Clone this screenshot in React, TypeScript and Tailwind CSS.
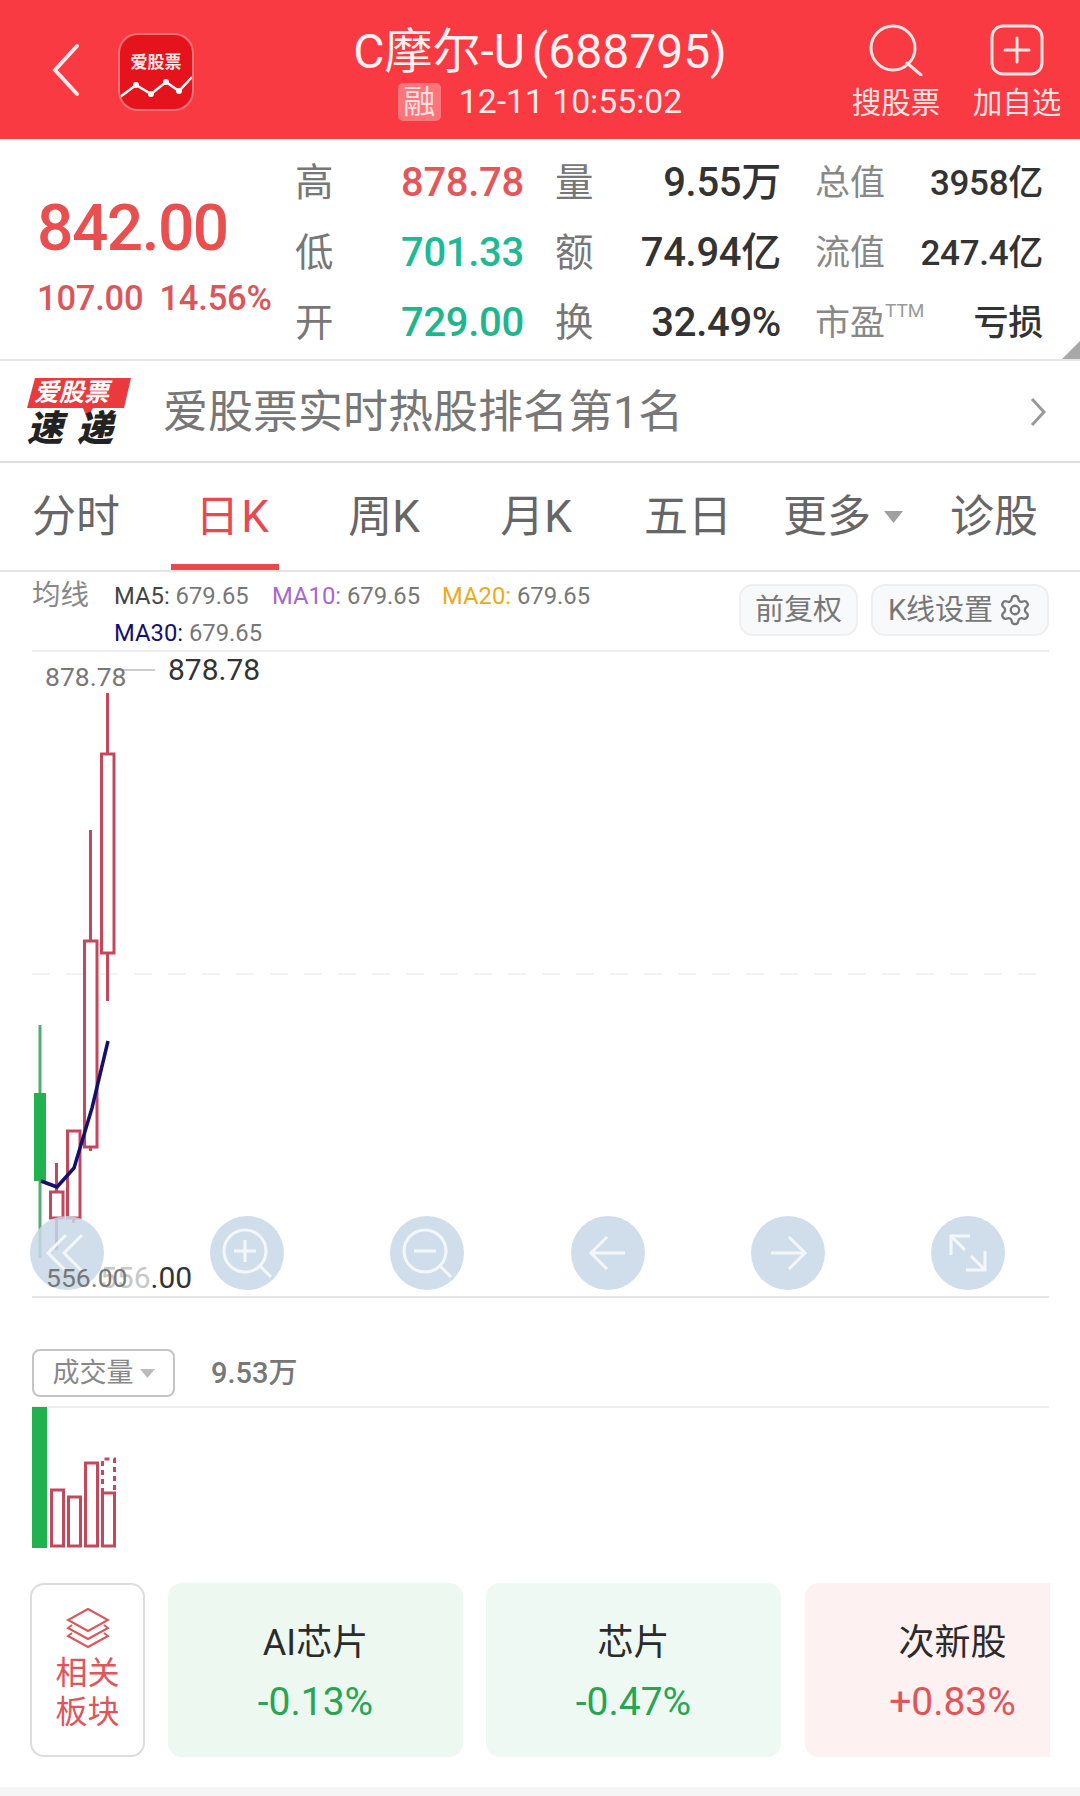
import React from "react";
import { Settings } from "lucide-react";

const Stat = ({ a, v, vc, b, w, c, x, extra }: any) => (
  <div className="flex items-center h-[70px]">
    <div className="w-[40px] text-[38.5px] leading-none text-[#777]">{a}</div>
    <div className={`w-[189px] text-right text-[40px] leading-none font-medium tracking-[-0.3px] ${vc}`}>{v}</div>
    <div className="w-[31px]" />
    <div className="w-[40px] text-[38.5px] leading-none text-[#777]">{b}</div>
    <div className="w-[186px] text-right text-[40px] leading-none font-medium tracking-[-0.3px] text-[#333]">{w}</div>
    <div className="w-[34px]" />
    <div className="relative w-[100px] text-[35px] leading-none text-[#888]">
      {c}
      {extra && <span className="absolute left-[70px] top-[-5px] text-[19px] text-[#999]">{extra}</span>}
    </div>
    <div className="w-[128px] text-right text-[35px] leading-none font-medium tracking-[-0.3px] text-[#333]">{x}</div>
  </div>
);

const Candle = ({ x, top, bodyTop, bodyBottom, low }: { x: number; top: number; bodyTop: number; bodyBottom: number; low: number }) => (
  <g stroke="#c4485c" strokeWidth="3" fill="none">
    <line x1={x} x2={x} y1={top} y2={bodyTop} />
    <line x1={x} x2={x} y1={bodyBottom} y2={low} />
    <rect x={x - 6} y={bodyTop} width="12.5" height={bodyBottom - bodyTop} fill="#fff" />
  </g>
);

const CircleBtn = ({ children }: { children: React.ReactNode }) => (
  <div className="w-[74px] h-[74px] rounded-full bg-[#c8d8e8]/85 flex items-center justify-center">
    <svg width="74" height="74" viewBox="0 0 74 74" fill="none" stroke="#f4f7fa" strokeWidth="3">{children}</svg>
  </div>
);

const Tab = ({ w, children, active }: any) => (
  <div className={`relative flex items-center justify-center h-full text-[44px] leading-none whitespace-nowrap ${w} ${active ? "text-[#e8484e]" : "text-[#666]"}`}>
    {children}
    {active && <div className="absolute bottom-0 left-[-26px] right-[-12px] h-[6px] bg-[#e8484e]" />}
  </div>
);

const Card = ({ name, v, bg, vc, w }: any) => (
  <div className={`shrink-0 h-[174px] ${w} ${bg} rounded-[14px] flex flex-col items-center pt-[39px]`}>
    <div className="text-[36px] leading-[42px] text-[#2b2b2b]">{name}</div>
    <div className={`mt-[17px] text-[39px] leading-[42px] ${vc}`}>{v}</div>
  </div>
);

export default function App() {
  return (
    <div className="relative w-[1080px] h-[1796px] overflow-hidden bg-white flex flex-col font-['Roboto','Noto_Sans_CJK_SC',sans-serif]">
      {/* Header */}
      <header className="h-[139px] shrink-0 bg-[#f93a42] flex text-white">
        <div className="w-[118px] flex items-center pl-[52px]">
          <svg width="28" height="54" viewBox="0 0 28 54" fill="none" stroke="#ffe9ea" strokeWidth="4" strokeLinecap="round">
            <path d="M25 3 3 27l22 24" />
          </svg>
        </div>
        <div className="flex items-center pt-[5px]">
          <div className="relative w-[76px] h-[78px] rounded-[20px] border-[2px] border-white/40 bg-[#e5141c] overflow-hidden">
            <svg className="absolute inset-0" width="72" height="74" viewBox="0 0 72 74" fill="none">
              <path d="M0 62 16 50 31 59 46 47 59 56 72 42" stroke="#fff" strokeWidth="2.5" />
              <circle cx="16" cy="50" r="3" fill="#fff" />
              <circle cx="31" cy="59" r="3" fill="#fff" />
              <circle cx="46" cy="47" r="3" fill="#fff" />
              <circle cx="59" cy="56" r="3" fill="#fff" />
            </svg>
            <div className="absolute left-0 right-0 top-[16px] text-center text-[17px] leading-[22px] font-bold text-[#ffe4e4]">爱股票</div>
          </div>
        </div>
        <div className="flex-1 flex flex-col items-center pl-[33px]">
          <div className="mt-[26px] text-[48px] leading-[52px] text-[#fff0f0] whitespace-nowrap">C摩尔-U<span className="ml-[7px]">(688795)</span></div>
          <div className="mt-[5px] flex items-center">
            <div className="w-[43px] h-[38px] rounded-[5px] bg-white/30 flex items-center justify-center text-[32px] leading-none text-[#ffe0e0]">融</div>
            <div className="ml-[18px] text-[33.7px] leading-none text-[#ffe8e8]">12-11 10:55:02</div>
          </div>
        </div>
        <div className="w-[86px] mr-[35px] flex flex-col items-center pt-[24px]">
          <svg width="54" height="52" viewBox="0 0 54 52" fill="none" stroke="#ffe4e4" strokeWidth="3" strokeLinecap="round">
            <circle cx="24" cy="24" r="22" />
            <path d="M38 39 52 51" />
          </svg>
          <div className="mt-[11px] text-[29.5px] leading-[32px] text-[#ffe4e4] whitespace-nowrap">搜股票</div>
        </div>
        <div className="w-[86px] mr-[20px] flex flex-col items-center pt-[24px]">
          <svg width="54" height="52" viewBox="0 0 54 52" fill="none" stroke="#ffe4e4" strokeWidth="3" strokeLinecap="round">
            <rect x="2" y="2" width="50" height="48" rx="11" />
            <path d="M27 14v24M15 26h24" />
          </svg>
          <div className="mt-[11px] text-[29.5px] leading-[32px] text-[#ffe4e4] whitespace-nowrap">加自选</div>
        </div>
      </header>

      {/* Quote */}
      <section className="relative h-[222px] shrink-0 flex border-b-[2px] border-[#e6e6e6]">
        <div className="w-[295px] pl-[37px] pt-[55px]">
          <div className="text-[64px] leading-[70px] font-medium tracking-[-1.5px] text-[#ea4f50]">842.00</div>
          <div className="mt-[15px] text-[34.5px] leading-[38px] text-[#d9575a] font-medium whitespace-nowrap tracking-[-0.2px]">107.00<span className="ml-[16px]">14.56%</span></div>
        </div>
        <div className="pt-[9px]">
          <Stat a="高" v="878.78" vc="text-[#e5555a]" b="量" w="9.55万" c="总值" x="3958亿" />
          <Stat a="低" v="701.33" vc="text-[#1fba94]" b="额" w="74.94亿" c="流值" x="247.4亿" />
          <Stat a="开" v="729.00" vc="text-[#1fb58d]" b="换" w="32.49%" c="市盈" x="亏损" extra="TTM" />
        </div>
        <svg className="absolute right-0 bottom-0" width="18" height="18" viewBox="0 0 18 18"><path d="M18 0v18H0z" fill="#a8a8a8" /></svg>
      </section>

      {/* Alert */}
      <section className="h-[102px] shrink-0 flex items-center pt-[2px] border-b-[2px] border-[#dedede]">
        <div className="relative ml-[27px] w-[104px] h-[68px]">
          <svg className="absolute inset-0" width="104" height="68" viewBox="0 0 104 68">
            <path d="M8 0H104L97 30H66L60 40 56 30H0z" fill="#ea3a3e" />
          </svg>
          <div className="absolute left-[7px] top-[1px] text-[25px] leading-[28px] font-bold italic text-white whitespace-nowrap">爱股票</div>
          <div className="absolute left-0 top-[34px] text-[36px] leading-[34px] font-black italic text-[#222] whitespace-nowrap tracking-[14px]">速递</div>
        </div>
        <div className="ml-[32px] text-[45px] leading-none text-[#777] whitespace-nowrap">爱股票实时热股排名第1名</div>
        <div className="flex-1" />
        <svg className="mr-[34px]" width="16" height="30" viewBox="0 0 16 30" fill="none" stroke="#999" strokeWidth="3"><path d="M2 2l12 13L2 28" /></svg>
      </section>

      {/* Tabs */}
      <nav className="h-[109px] shrink-0 flex items-center pl-[32px] border-b-[2px] border-[#e4e4e4]">
        <Tab w="w-[88px]">分时</Tab>
        <div className="w-[77px]" />
        <Tab w="w-[70px]" active>日<span className="ml-[2px]">K</span></Tab>
        <div className="w-[80px]" />
        <Tab w="w-[74px]">周K</Tab>
        <div className="w-[78px]" />
        <Tab w="w-[74px]">月K</Tab>
        <div className="w-[71px]" />
        <Tab w="w-[88px]">五日</Tab>
        <div className="w-[50px]" />
        <Tab w="w-[90px]">更多</Tab>
        <svg className="ml-[12px]" width="19" height="12" viewBox="0 0 19 12"><path d="M0 0h19l-9.5 12z" fill="#a0a0a0" /></svg>
        <div className="w-[47px]" />
        <Tab w="w-[88px]">诊股</Tab>
      </nav>

      {/* Legend */}
      <section className="h-[80px] shrink-0 ml-[32px] mr-[31px] flex border-b-[2px] border-[#eeeeee]">
        <div className="w-[82px] pt-[8px] text-[28.5px] leading-[32px] text-[#888]">均线</div>
        <div className="w-[600px] flex flex-wrap content-start pt-[6px] text-[23.8px] leading-[37px] text-[#777] whitespace-nowrap">
          <div className="w-[158px]"><span className="text-[#444]">MA5:</span> 679.65</div>
          <div className="w-[170px]"><span className="text-[#a866cf]">MA10:</span> 679.65</div>
          <div className="w-[170px]"><span className="text-[#eeaa1c]">MA20:</span> 679.65</div>
          <div className="w-full"><span className="text-[#14106e]">MA30:</span> 679.65</div>
        </div>
        <div className="flex-1" />
        <div className="flex pt-[12px] gap-[13px]">
          <div className="w-[119px] h-[52px] rounded-[14px] bg-[#f8f9fb] border-[2px] border-[#eeeff2] flex items-center justify-center text-[29px] leading-none text-[#777]">前复权</div>
          <div className="w-[178px] h-[52px] rounded-[14px] bg-[#f8f9fb] border-[2px] border-[#eeeff2] flex items-center justify-center gap-[5px] text-[29px] leading-none text-[#777]">
            K线设置<Settings size={34} strokeWidth={1.6} color="#777" />
          </div>
        </div>
      </section>

      {/* Chart */}
      <section className="relative h-[646px] shrink-0 ml-[32px] mr-[31px] border-b-[2px] border-[#e6e6e6]">
        <svg className="absolute inset-0" width="1017" height="644" viewBox="32 652 1017 644" fill="none">
          <line x1="32" x2="1049" y1="974" y2="974" stroke="#f0f0f0" strokeWidth="1.5" strokeDasharray="18 16" />
          <line x1="115" x2="155" y1="670" y2="670" stroke="#cccccc" strokeWidth="2" />
          <line x1="40" x2="40" y1="1025" y2="1258" stroke="#4fae72" strokeWidth="3" />
          <rect x="34" y="1093" width="12" height="88" fill="#22b14f" />
          <Candle x={56.5} top={1163} bodyTop={1192} bodyBottom={1218} low={1250} />
          <Candle x={73.5} top={1131} bodyTop={1131} bodyBottom={1218} low={1223} />
          <Candle x={107.5} top={693} bodyTop={754} bodyBottom={953} low={1001} />
          <Candle x={90.5} top={830} bodyTop={941} bodyBottom={1147} low={1151} />
          <path d="M41 1181 57 1187 74 1168 92 1108 108 1041" stroke="#14106e" strokeWidth="3.5" strokeLinejoin="round" />
        </svg>
        <div className="absolute left-[13px] top-[10px] text-[26.5px] leading-[30px] text-[#777]">878.78</div>
        <div className="absolute left-[136px] top-[1px] text-[30px] leading-[34px] text-[#333]">878.78</div>
        <div className="absolute left-[68px] bottom-[1px] text-[30px] leading-[34px] text-[#333]"><span className="text-[#c8c8c8]">556</span>.00</div>
        <div className="absolute left-[-2px] w-[975px] top-[564px] flex justify-between">
          <CircleBtn><path d="M36 19 18 37l18 18M52 19 34 37l18 18" /></CircleBtn>
          <CircleBtn><circle cx="35" cy="35" r="21" /><path d="M50 50l11 11M24 35h22M35 24v22" /></CircleBtn>
          <CircleBtn><circle cx="35" cy="35" r="21" /><path d="M50 50l11 11M24 35h22" /></CircleBtn>
          <CircleBtn><path d="M54 37H20M36 21 20 37l16 16" /></CircleBtn>
          <CircleBtn><path d="M20 37h34M38 21l16 16-16 16" /></CircleBtn>
          <CircleBtn><path d="M20 39V20h19M20 20l14 14M54 35v19H35M54 54 40 40" /></CircleBtn>
        </div>
        <div className="absolute left-[14px] bottom-[1px] text-[26.5px] leading-[34px] text-[#777]">556.00</div>
      </section>

      {/* Volume */}
      <section className="h-[110px] shrink-0 ml-[32px] mr-[31px] pt-[51px] flex border-b-[2px] border-[#eeeeee]">
        <div className="w-[143px] h-[48px] rounded-[8px] border-[2px] border-[#c4c4c4] flex items-center justify-center gap-[6px] text-[27px] leading-none text-[#888]">
          成交量
          <svg width="15" height="9" viewBox="0 0 15 9"><path d="M0 0h15L7.5 9z" fill="#bbb" /></svg>
        </div>
        <div className="ml-[36px] h-[48px] flex items-center text-[29px] leading-none font-medium text-[#777]">9.53万</div>
      </section>
      <div className="h-[140px] shrink-0 ml-[32px] mr-[31px]">
        <svg className="-mt-[1px] overflow-visible" width="100" height="141" viewBox="32 1407 100 141" fill="none" stroke="#c4485c" strokeWidth="3">
          <rect x="32" y="1407" width="15" height="141" fill="#22b14f" stroke="none" />
          <rect x="51.5" y="1490" width="12" height="56" />
          <rect x="68.5" y="1497" width="12" height="49" />
          <rect x="85.5" y="1463" width="12" height="83" />
          <rect x="102.5" y="1493" width="12" height="53" />
          <path d="M102.5 1493v-34h12v34" strokeDasharray="5 4" />
        </svg>
      </div>

      {/* Related */}
      <section className="mt-[35px] h-[174px] shrink-0 ml-[30px] w-[1020px] flex overflow-hidden">
        <div className="shrink-0 w-[115px] h-[174px] rounded-[14px] border-[2px] border-[#dddddd] flex flex-col items-center pt-[22px]">
          <svg width="44" height="42" viewBox="0 0 44 42" fill="none" stroke="#d9575a" strokeWidth="2">
            <path d="M22 2 42 13 22 24 2 13z" />
            <path d="M6 18 2 21l20 11 20-11-4-3" />
            <path d="M6 26 2 29l20 11 20-11-4-3" />
          </svg>
          <div className="mt-[5px] text-[32px] leading-[39px] text-center text-[#e0555a]">相关<br />板块</div>
        </div>
        <div className="w-[23px] shrink-0" />
        <Card w="w-[295px]" name="AI芯片" v="-0.13%" bg="bg-[#edf8f1]" vc="text-[#27a552]" />
        <div className="w-[23px] shrink-0" />
        <Card w="w-[295px]" name="芯片" v="-0.47%" bg="bg-[#eef9f3]" vc="text-[#27a552]" />
        <div className="w-[24px] shrink-0" />
        <Card w="w-[295px]" name="次新股" v="+0.83%" bg="bg-[#fdf1f1]" vc="text-[#e0555a]" />
      </section>
      <div className="flex-1" />
      <div className="h-[9px] shrink-0 bg-[#f5f5f5]" />
    </div>
  );
}
